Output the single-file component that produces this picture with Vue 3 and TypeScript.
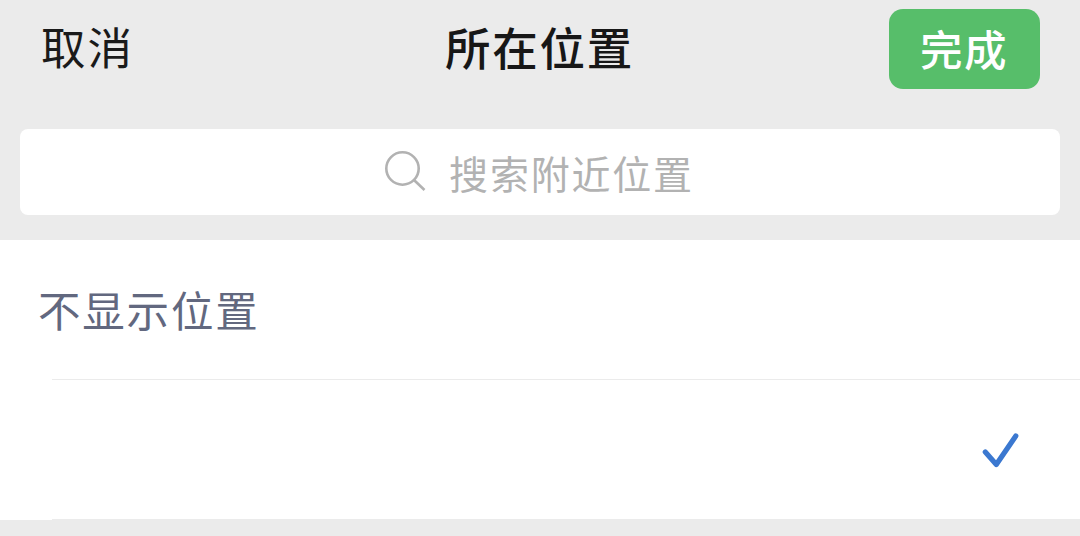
<template>
  <div class="page">
    <header class="top">
      <!-- Title bar -->
      <div class="nav-bar">
        <div class="nav-side">
          <button class="cancel-btn" type="button">取消</button>
        </div>
        <h1 class="nav-title">所在位置</h1>
        <div class="nav-side nav-side-right">
          <button class="done-btn" type="button">完成</button>
        </div>
      </div>

      <!-- Search -->
      <div class="search-box">
        <svg class="search-icon" viewBox="0 0 44 44" fill="none">
          <circle cx="19.5" cy="18.5" r="16.2" />
          <path d="M31 30L41.5 40" />
        </svg>
        <span class="search-placeholder">搜索附近位置</span>
      </div>
    </header>

    <!-- Location options -->
    <ul class="list">
      <li
        v-for="item in options"
        :key="item.id"
        class="list-item"
        @click="selected = item.id"
      >
        <span class="item-label">{{ item.label }}</span>
        <svg v-if="selected === item.id" class="check-icon" viewBox="0 0 40 40" fill="none">
          <path d="M5.3 22L16.3 34.5L35.8 6" />
        </svg>
      </li>
    </ul>
  </div>
</template>

<script setup lang="ts">
import { ref } from 'vue';

interface LocationOption {
  id: number;
  label: string;
}

const options: LocationOption[] = [
  { id: 0, label: '不显示位置' },
  { id: 1, label: '' },
];

const selected = ref(1);
</script>

<style>
body {
  margin: 0;
  background: #ebebeb;
}
</style>

<style scoped>
.page {
  height: 536px;
  overflow: hidden;
  background: #ebebeb;
  font-family: 'Noto Sans CJK SC', sans-serif;
}

.top {
  box-sizing: border-box;
  height: 240px;
  padding: 0 20px;
}

.nav-bar {
  display: flex;
  align-items: center;
  height: 97px;
  margin-bottom: 32px;
}

/* Both sides share the width evenly so the title stays centred */
.nav-side {
  box-sizing: border-box;
  flex: 1;
  display: flex;
  min-width: 0;
  padding-right: 20px;
}

.nav-side-right {
  justify-content: flex-end;
}

button {
  border: none;
  font-family: inherit;
  cursor: pointer;
}

.cancel-btn {
  padding: 0 0 5px 21px;
  background: none;
  color: #1a1a1a;
  font-size: 44.5px;
  letter-spacing: 2px;
  line-height: 80px;
}

.nav-title {
  margin: 0;
  padding: 0 1px 5px 0;
  color: #171717;
  font-size: 45.5px;
  font-weight: 500;
  letter-spacing: 1.8px;
  line-height: 80px;
}

.done-btn {
  width: 151px;
  height: 80px;
  padding: 0 1px 3px 0;
  border-radius: 14px;
  background: #57be6a;
  color: #fff;
  font-size: 42.5px;
  font-weight: 500;
  letter-spacing: 1.5px;
  line-height: 77px;
}

.search-box {
  display: flex;
  align-items: center;
  justify-content: center;
  box-sizing: border-box;
  height: 86px;
  padding-right: 3px;
  border-radius: 8px;
  background: #fff;
}

.search-icon {
  width: 44px;
  height: 44px;
  margin-right: 22px;
  stroke: #b2b2b2;
  stroke-width: 2.6;
}

.search-placeholder {
  color: #b2b2b2;
  font-size: 39px;
  letter-spacing: 1.8px;
  line-height: 86px;
}

.list {
  margin: 0;
  padding: 0;
  background: #fff;
  list-style: none;
}

.list-item {
  display: flex;
  align-items: center;
  justify-content: space-between;
  height: 139px;
  padding: 0 60px 0 38px;
  border-bottom: 1px solid;
  border-image: linear-gradient(to right, #fff 53px, #ebebeb 53px) 1;
}

.item-label {
  padding-bottom: 3px;
  color: #62687f;
  font-size: 42.5px;
  letter-spacing: 1.8px;
}

.check-icon {
  width: 40px;
  height: 40px;
  stroke: #3b78d0;
  stroke-width: 5.2;
  stroke-linecap: round;
  stroke-linejoin: round;
}
</style>
